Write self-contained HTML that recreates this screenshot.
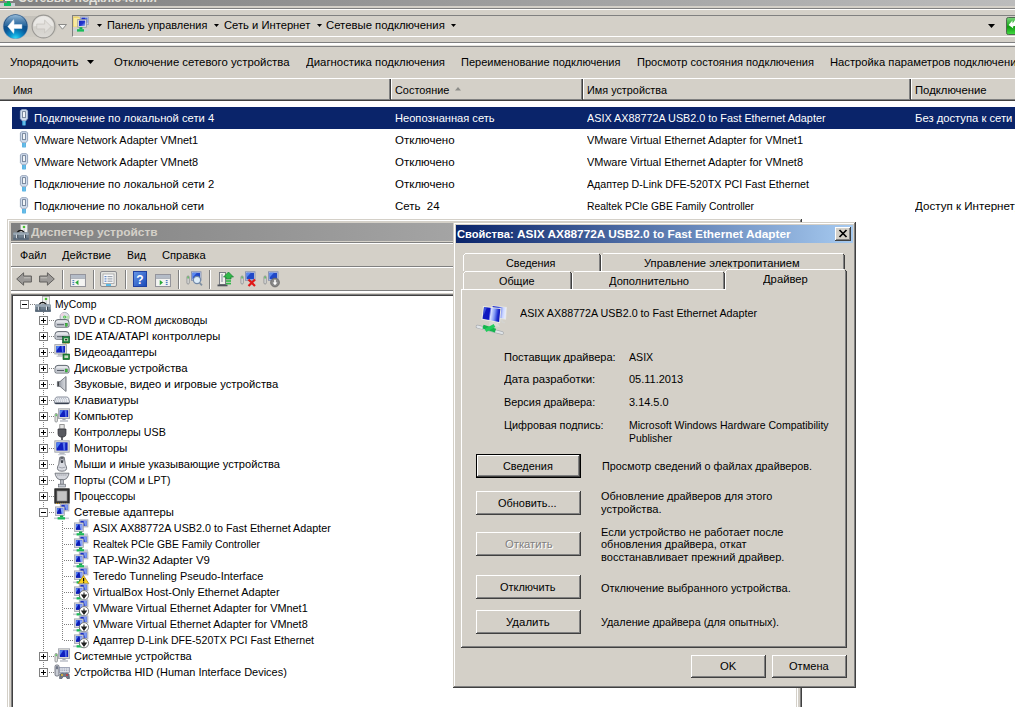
<!DOCTYPE html>
<html><head><meta charset="utf-8">
<style>
html,body{margin:0;padding:0;}
body{width:1015px;height:707px;overflow:hidden;position:relative;background:#d4d0c8;font-family:"Liberation Sans",sans-serif;font-size:11px;color:#000;}
div,span{position:absolute;white-space:pre;box-sizing:border-box;}
svg{position:absolute;overflow:visible;}
.t{transform-origin:0 50%;}
</style></head><body>
<div style="left:0;top:0;width:1015px;height:6px;background:linear-gradient(90deg,#808080,#bcbcbc);overflow:hidden;">
<span class="t" style="left:18.4px;top:-10px;font-size:13px;line-height:16px;height:16px;color:#e4e2dc;font-weight:bold;transform:scaleX(0.9418);">Сетевые подключения</span>
</div>
<div style="left:0px;top:0px;width:3px;height:1px;background:#e8c840;"></div>
<div style="left:5px;top:0px;width:8px;height:1px;background:#f4f4f0;"></div>
<div style="left:7px;top:1px;width:3px;height:2px;background:#18b050;"></div>
<div style="left:0px;top:3px;width:15px;height:3px;background:#c4ccd4;"></div>
<div style="left:4px;top:3px;width:7px;height:3px;background:#10c060;"></div>
<div style="left:0px;top:8px;width:1015px;height:1px;background:#808080;"></div>
<div style="left:0px;top:9px;width:1015px;height:1px;background:#ffffff;"></div>
<div style="left:0px;top:42px;width:1015px;height:1px;background:#808080;"></div>
<div style="left:0px;top:43px;width:1015px;height:2px;background:#ffffff;"></div>
<div style="left:0px;top:45px;width:1015px;height:1px;background:#e6e4de;"></div>
<div style="left:0px;top:46px;width:1015px;height:1px;background:#808080;"></div>
<div style="left:3px;top:16px;width:54px;height:21px;border-radius:11px;background:linear-gradient(180deg,#c4c1ba,#cfccc4);"></div>
<svg style="left:3px;top:14px" width="25" height="25" viewBox="0 0 25 25">
<defs>
<radialGradient id="bk1" cx="50%" cy="100%" r="80%"><stop offset="0" stop-color="#30dcf8"/><stop offset="0.3" stop-color="#0a90cc"/><stop offset="0.62" stop-color="#0a5898"/><stop offset="1" stop-color="#184878"/></radialGradient>
<linearGradient id="bk2" x1="0" y1="0" x2="0" y2="1"><stop offset="0" stop-color="#a4c8e4" stop-opacity=".9"/><stop offset="1" stop-color="#3c7cb4" stop-opacity=".5"/></linearGradient>
</defs>
<circle cx="12.5" cy="12.5" r="12.6" fill="#8ca0b8"/>
<circle cx="12.5" cy="12.5" r="12" fill="url(#bk1)"/>
<path d="M1.2 12.2A11.3 11.3 0 0 1 23.8 12.2Q12.5 10 1.2 12.2Z" fill="url(#bk2)"/>
<path d="M4.8 12.5L10.6 5.6Q11.4 8 11 10.5H18.9V14.5H11Q11.4 17 10.6 19.4Z" fill="#fff" stroke="#dce8f4" stroke-width=".5" stroke-linejoin="round"/>
</svg>
<svg style="left:31px;top:14px" width="25" height="25" viewBox="0 0 27 27">
<defs>
<linearGradient id="fw1" x1="0" y1="0" x2="0" y2="1"><stop offset="0" stop-color="#e6e4e0"/><stop offset="0.5" stop-color="#d2d0ca"/><stop offset="1" stop-color="#dcdad6"/></linearGradient>
</defs>
<circle cx="13.5" cy="13.5" r="12.3" fill="url(#fw1)" stroke="#9a9894" stroke-width="1.2"/>
<path d="M2.6 13.5A10.9 10.9 0 0 1 24.4 13.5Q13.5 11.5 2.6 13.5Z" fill="#ecebe8" opacity=".8"/>
<path d="M21.8 13.5L14.7 6.6V10.9H6.2V16.1H14.7V20.4Z" fill="#e2e0dc" stroke="#c4c2bc" stroke-width=".8" stroke-linejoin="round"/>
</svg>
<svg style="left:58px;top:24px" width="9" height="6" viewBox="0 0 9 6"><path d="M0.5 0.5H8.5L4.5 5.2Z" fill="#f4f4f2" stroke="#8a8a88" stroke-width="1"/></svg>
<div style="left:72px;top:15px;width:960px;height:22px;background:#d4d0c8;border:1px solid;border-color:#808080 #fff #fff #808080;"></div>
<svg style="left:73px;top:16px" width="16" height="16" viewBox="0 0 16 16">
<defs><linearGradient id="as1" x1="0" y1="0" x2="1" y2="1"><stop offset="0" stop-color="#1424c0"/><stop offset=".55" stop-color="#2438d0"/><stop offset="1" stop-color="#a8c0f8"/></linearGradient></defs>
<path d="M0.2 0.4H5L6.4 1.6H7.4V11H0.2Z" fill="#ecd060"/><path d="M0.8 1.8H6.6V10.6H0.8Z" fill="#f8eaa0"/>
<rect x="7.4" y="0.9" width="8" height="7.8" fill="#c4cce4" stroke="#8c94b0" stroke-width=".6"/><rect x="8.6" y="1.8" width="5.8" height="5" fill="#4c6ce0"/><path d="M8.6 1.8H12V3.6H8.6Z" fill="#1c2cc8"/>
<rect x="4.8" y="3.6" width="8.6" height="7.6" fill="#e6e6e2" stroke="#888c98" stroke-width=".7"/>
<rect x="6" y="4.6" width="6.2" height="5.4" fill="url(#as1)"/>
<rect x="6.4" y="11.2" width="3" height="2.4" fill="#14b050"/>
<rect x="0.4" y="13.6" width="14.8" height="1.5" fill="#c8d4dc"/><rect x="4" y="13.2" width="7" height="2.4" fill="#18bc58"/>
</svg>
<svg style="left:97px;top:23.7px" width="5" height="3" viewBox="0 0 5 3"><path d="M0 0H5L2.5 3Z" fill="#000"/></svg>
<span class="t" style="left:106.9px;top:18px;font-size:11px;line-height:14px;height:14px;color:#000;transform:scaleX(0.9925);">Панель управления</span>
<svg style="left:213.5px;top:23.7px" width="5" height="3" viewBox="0 0 5 3"><path d="M0 0H5L2.5 3Z" fill="#000"/></svg>
<span class="t" style="left:223.9px;top:18px;font-size:11px;line-height:14px;height:14px;color:#000;transform:scaleX(1.0187);">Сеть и Интернет</span>
<svg style="left:316.5px;top:23.7px" width="5" height="3" viewBox="0 0 5 3"><path d="M0 0H5L2.5 3Z" fill="#000"/></svg>
<span class="t" style="left:326.4px;top:18px;font-size:11px;line-height:14px;height:14px;color:#000;transform:scaleX(1.0304);">Сетевые подключения</span>
<svg style="left:451px;top:23.7px" width="5" height="3" viewBox="0 0 5 3"><path d="M0 0H5L2.5 3Z" fill="#000"/></svg>
<svg style="left:988px;top:24.3px" width="7" height="4" viewBox="0 0 7 4"><path d="M0 0H7L3.5 4Z" fill="#000"/></svg>
<svg style="left:1006px;top:17px" width="9" height="18" viewBox="0 0 9 18">
<defs><linearGradient id="go" x1="0" y1="0" x2="0" y2="1"><stop offset="0" stop-color="#7cd47c"/><stop offset=".4" stop-color="#2cb02c"/><stop offset=".55" stop-color="#109c10"/><stop offset="1" stop-color="#44dc44"/></linearGradient></defs>
<rect x="0.5" y="0.5" width="14" height="17" rx="1.8" fill="url(#go)" stroke="#506850"/>
<path d="M2.6 8L6.4 3.6L6.6 6.2Q8 5 9 3V9Q8 8.8 6.8 9.4L7.4 11.6Z" fill="#fff"/>
</svg>
<span class="t" style="left:10.4px;top:55px;font-size:11px;line-height:14px;height:14px;color:#000;transform:scaleX(1.0463);">Упорядочить</span>
<svg style="left:86.8px;top:60px" width="7" height="4" viewBox="0 0 7 4"><path d="M0 0H7L3.5 4Z" fill="#000"/></svg>
<span class="t" style="left:113.9px;top:55px;font-size:11px;line-height:14px;height:14px;color:#000;transform:scaleX(1.0327);">Отключение сетевого устройства</span>
<span class="t" style="left:306.4px;top:55px;font-size:11px;line-height:14px;height:14px;color:#000;transform:scaleX(1.0337);">Диагностика подключения</span>
<span class="t" style="left:461.4px;top:55px;font-size:11px;line-height:14px;height:14px;color:#000;transform:scaleX(1.0022);">Переименование подключения</span>
<span class="t" style="left:636.9px;top:55px;font-size:11px;line-height:14px;height:14px;color:#000;transform:scaleX(1.0034);">Просмотр состояния подключения</span>
<span class="t" style="left:829.9px;top:55px;font-size:11px;line-height:14px;height:14px;color:#000;transform:scaleX(1.0204);">Настройка параметров подключения</span>
<div style="left:0px;top:78px;width:1015px;height:1px;background:#ffffff;"></div>
<div style="left:0px;top:99px;width:1015px;height:1px;background:#808080;"></div>
<div style="left:0px;top:100px;width:1015px;height:1px;background:#404040;"></div>
<div style="left:389px;top:79px;width:1px;height:20px;background:#808080;"></div>
<div style="left:390px;top:79px;width:1px;height:21px;background:#404040;"></div>
<div style="left:391px;top:78px;width:1px;height:21px;background:#ffffff;"></div>
<div style="left:581px;top:79px;width:1px;height:20px;background:#808080;"></div>
<div style="left:582px;top:79px;width:1px;height:21px;background:#404040;"></div>
<div style="left:583px;top:78px;width:1px;height:21px;background:#ffffff;"></div>
<div style="left:909px;top:79px;width:1px;height:20px;background:#808080;"></div>
<div style="left:910px;top:79px;width:1px;height:21px;background:#404040;"></div>
<div style="left:911px;top:78px;width:1px;height:21px;background:#ffffff;"></div>
<span class="t" style="left:13px;top:83px;font-size:11px;line-height:14px;height:14px;color:#000;transform:scaleX(0.9050);">Имя</span>
<span class="t" style="left:395px;top:83px;font-size:11px;line-height:14px;height:14px;color:#000;transform:scaleX(0.9911);">Состояние</span>
<svg style="left:455px;top:87px" width="6" height="4" viewBox="0 0 6 4"><path d="M0 3.5H6L3 0Z" fill="#8c8c88"/></svg>
<span class="t" style="left:587.4px;top:83px;font-size:11px;line-height:14px;height:14px;color:#000;transform:scaleX(0.9858);">Имя устройства</span>
<span class="t" style="left:914.8px;top:83px;font-size:11px;line-height:14px;height:14px;color:#000;transform:scaleX(1.0265);">Подключение</span>
<div style="left:0px;top:101px;width:1015px;height:606px;background:#fff;"></div>
<div style="left:12px;top:107px;width:1003px;height:22px;background:#0a246a;"></div>
<svg style="left:19px;top:109px" width="10" height="17" viewBox="0 0 10 17">
<path d="M2.6 0.7H7.4L8.6 2V9.6L6.8 11.8H3.2L1.4 9.6V2Z" fill="#d0dcec" stroke="#a4b8d4" stroke-width=".9"/>
<rect x="3.6" y="2.6" width="2.8" height="6" fill="#f8fafc" stroke="#6c7c94" stroke-width=".9"/>
<rect x="3.2" y="12" width="3.6" height="4.4" fill="#38a4dc"/><rect x="4.6" y="12" width=".9" height="4.4" fill="#9cd8f4"/>
</svg>
<span class="t" style="left:33.8px;top:111px;font-size:11px;line-height:14px;height:14px;color:#fff;transform:scaleX(1.0180);">Подключение по локальной сети 4</span>
<span class="t" style="left:394.8px;top:111px;font-size:11px;line-height:14px;height:14px;color:#fff;transform:scaleX(1.0094);">Неопознанная сеть</span>
<span class="t" style="left:587.4px;top:111px;font-size:11px;line-height:14px;height:14px;color:#fff;transform:scaleX(0.9824);">ASIX AX88772A USB2.0 to Fast Ethernet Adapter</span>
<span class="t" style="left:915px;top:111px;font-size:11px;line-height:14px;height:14px;color:#fff;transform:scaleX(1.0217);">Без доступа к сети</span>
<svg style="left:19px;top:131px" width="10" height="17" viewBox="0 0 10 17">
<path d="M2.6 0.7H7.4L8.6 2V9.6L6.8 11.8H3.2L1.4 9.6V2Z" fill="#d0dcec" stroke="#8c9cb4" stroke-width=".9"/>
<rect x="3.6" y="2.6" width="2.8" height="6" fill="#f8fafc" stroke="#6c7c94" stroke-width=".9"/>
<rect x="3.2" y="12" width="3.6" height="4.4" fill="#38a4dc"/><rect x="4.6" y="12" width=".9" height="4.4" fill="#9cd8f4"/>
</svg>
<span class="t" style="left:33.8px;top:133px;font-size:11px;line-height:14px;height:14px;color:#000;transform:scaleX(0.9904);">VMware Network Adapter VMnet1</span>
<span class="t" style="left:394.8px;top:133px;font-size:11px;line-height:14px;height:14px;color:#000;transform:scaleX(1.0456);">Отключено</span>
<span class="t" style="left:587.4px;top:133px;font-size:11px;line-height:14px;height:14px;color:#000;transform:scaleX(0.9960);">VMware Virtual Ethernet Adapter for VMnet1</span>
<svg style="left:19px;top:153px" width="10" height="17" viewBox="0 0 10 17">
<path d="M2.6 0.7H7.4L8.6 2V9.6L6.8 11.8H3.2L1.4 9.6V2Z" fill="#d0dcec" stroke="#8c9cb4" stroke-width=".9"/>
<rect x="3.6" y="2.6" width="2.8" height="6" fill="#f8fafc" stroke="#6c7c94" stroke-width=".9"/>
<rect x="3.2" y="12" width="3.6" height="4.4" fill="#38a4dc"/><rect x="4.6" y="12" width=".9" height="4.4" fill="#9cd8f4"/>
</svg>
<span class="t" style="left:33.8px;top:155px;font-size:11px;line-height:14px;height:14px;color:#000;transform:scaleX(0.9904);">VMware Network Adapter VMnet8</span>
<span class="t" style="left:394.8px;top:155px;font-size:11px;line-height:14px;height:14px;color:#000;transform:scaleX(1.0456);">Отключено</span>
<span class="t" style="left:587.4px;top:155px;font-size:11px;line-height:14px;height:14px;color:#000;transform:scaleX(0.9960);">VMware Virtual Ethernet Adapter for VMnet8</span>
<svg style="left:19px;top:175px" width="10" height="17" viewBox="0 0 10 17">
<path d="M2.6 0.7H7.4L8.6 2V9.6L6.8 11.8H3.2L1.4 9.6V2Z" fill="#d0dcec" stroke="#8c9cb4" stroke-width=".9"/>
<rect x="3.6" y="2.6" width="2.8" height="6" fill="#f8fafc" stroke="#6c7c94" stroke-width=".9"/>
<rect x="3.2" y="12" width="3.6" height="4.4" fill="#38a4dc"/><rect x="4.6" y="12" width=".9" height="4.4" fill="#9cd8f4"/>
</svg>
<span class="t" style="left:33.8px;top:177px;font-size:11px;line-height:14px;height:14px;color:#000;transform:scaleX(1.0180);">Подключение по локальной сети 2</span>
<span class="t" style="left:394.8px;top:177px;font-size:11px;line-height:14px;height:14px;color:#000;transform:scaleX(1.0456);">Отключено</span>
<span class="t" style="left:587.4px;top:177px;font-size:11px;line-height:14px;height:14px;color:#000;transform:scaleX(0.9676);">Адаптер D-Link DFE-520TX PCI Fast Ethernet</span>
<svg style="left:19px;top:197px" width="10" height="17" viewBox="0 0 10 17">
<path d="M2.6 0.7H7.4L8.6 2V9.6L6.8 11.8H3.2L1.4 9.6V2Z" fill="#d0dcec" stroke="#8c9cb4" stroke-width=".9"/>
<rect x="3.6" y="2.6" width="2.8" height="6" fill="#f8fafc" stroke="#6c7c94" stroke-width=".9"/>
<rect x="3.2" y="12" width="3.6" height="4.4" fill="#38a4dc"/><rect x="4.6" y="12" width=".9" height="4.4" fill="#9cd8f4"/>
</svg>
<span class="t" style="left:33.8px;top:199px;font-size:11px;line-height:14px;height:14px;color:#000;transform:scaleX(1.0140);">Подключение по локальной сети</span>
<span class="t" style="left:394.8px;top:199px;font-size:11px;line-height:14px;height:14px;color:#000;transform:scaleX(1.0414);">Сеть  24</span>
<span class="t" style="left:587.4px;top:199px;font-size:11px;line-height:14px;height:14px;color:#000;transform:scaleX(0.9420);">Realtek PCIe GBE Family Controller</span>
<span class="t" style="left:915px;top:199px;font-size:11px;line-height:14px;height:14px;color:#000;transform:scaleX(1.0542);">Доступ к Интернету</span>
<div style="left:7px;top:219px;width:795px;height:488px;background:#d4d0c8;"></div>
<div style="left:8px;top:220px;width:792px;height:1px;background:#ffffff;"></div>
<div style="left:8px;top:220px;width:1px;height:487px;background:#ffffff;"></div>
<div style="left:800px;top:220px;width:1px;height:487px;background:#808080;"></div>
<div style="left:801px;top:219px;width:1px;height:488px;background:#404040;"></div>
<div style="left:11px;top:223px;width:787px;height:18px;background:linear-gradient(90deg,#808080,#c0c0c0);"></div>
<svg style="left:13px;top:224px" width="16" height="16" viewBox="0 0 16 16"><rect x="7.4" y="0.4" width="7.2" height="8" fill="#f2f2f0" stroke="#a4a8ac" stroke-width=".8"/><circle cx="11" cy="3" r="1.3" fill="#48c030"/><rect x="10.6" y="4.6" width="1.4" height="3.4" fill="#d0d4d8"/><path d="M4 8.6Q7.6 4.2 11.4 8.6" fill="none" stroke="#101010" stroke-width="1.3"/><rect x="0.2" y="8.4" width="15.6" height="7.4" rx=".8" fill="#70808e"/><rect x="0.2" y="8.4" width="15.6" height="2.6" rx=".8" fill="#98a6b2"/><rect x="0.2" y="13.6" width="15.6" height="2.2" fill="#586878"/><rect x="3.2" y="10.6" width="1.6" height="3.6" fill="#e8ecf0"/><rect x="4.2" y="10.6" width="1" height="3.6" fill="#38424c"/><rect x="11" y="10.6" width="1.6" height="3.6" fill="#e8ecf0"/><rect x="12" y="10.6" width="1" height="3.6" fill="#38424c"/></svg>
<span class="t" style="left:31.4px;top:225px;font-size:11px;line-height:14px;height:14px;color:#d4d0c8;font-weight:bold;transform:scaleX(1.0836);">Диспетчер устройств</span>
<div style="left:11px;top:242px;width:787px;height:1px;background:#808080;"></div>
<div style="left:11px;top:243px;width:787px;height:1px;background:#ffffff;"></div>
<span class="t" style="left:20.4px;top:248px;font-size:11px;line-height:14px;height:14px;color:#000;transform:scaleX(0.9761);">Файл</span>
<span class="t" style="left:62.4px;top:248px;font-size:11px;line-height:14px;height:14px;color:#000;transform:scaleX(1.0132);">Действие</span>
<span class="t" style="left:127px;top:248px;font-size:11px;line-height:14px;height:14px;color:#000;transform:scaleX(0.9545);">Вид</span>
<span class="t" style="left:161.8px;top:248px;font-size:11px;line-height:14px;height:14px;color:#000;transform:scaleX(1.0103);">Справка</span>
<div style="left:11px;top:266px;width:787px;height:1px;background:#808080;"></div>
<div style="left:11px;top:267px;width:787px;height:1px;background:#ffffff;"></div>
<div style="left:11px;top:268px;width:1px;height:22px;background:#ffffff;"></div>
<div style="left:11px;top:244px;width:1px;height:22px;background:#ffffff;"></div>
<div style="left:11px;top:290px;width:787px;height:1px;background:#808080;"></div>
<div style="left:11px;top:291px;width:787px;height:2px;background:#ffffff;"></div>
<div style="left:62px;top:270px;width:1px;height:19px;background:#808080;"></div>
<div style="left:63px;top:270px;width:1px;height:19px;background:#ffffff;"></div>
<div style="left:93px;top:270px;width:1px;height:19px;background:#808080;"></div>
<div style="left:94px;top:270px;width:1px;height:19px;background:#ffffff;"></div>
<div style="left:125px;top:270px;width:1px;height:19px;background:#808080;"></div>
<div style="left:126px;top:270px;width:1px;height:19px;background:#ffffff;"></div>
<div style="left:178px;top:270px;width:1px;height:19px;background:#808080;"></div>
<div style="left:179px;top:270px;width:1px;height:19px;background:#ffffff;"></div>
<div style="left:209px;top:270px;width:1px;height:19px;background:#808080;"></div>
<div style="left:210px;top:270px;width:1px;height:19px;background:#ffffff;"></div>
<svg style="left:16px;top:272px" width="16" height="14" viewBox="0 0 16 14"><path d="M0.7 7L7.6 0.8V4H15.4V10H7.6V13.2Z" fill="#9c9a98" stroke="#62605e" stroke-width="1" stroke-linejoin="round"/><path d="M8 5H14.4V6.4H8Z" fill="#b8b6b2"/></svg>
<svg style="left:39px;top:272px" width="16" height="14" viewBox="0 0 16 14"><path d="M15.3 7L8.4 0.8V4H0.6V10H8.4V13.2Z" fill="#9c9a98" stroke="#62605e" stroke-width="1" stroke-linejoin="round"/><path d="M1.6 5H8V6.4H1.6Z" fill="#b8b6b2"/></svg>
<svg style="left:70px;top:274px" width="16" height="13" viewBox="0 0 17 14">
<rect x="0.5" y="0.5" width="16" height="13" fill="#f4f4f2" stroke="#8c8c94"/>
<rect x="1" y="1" width="15" height="3" fill="#b4bcc8"/><rect x="1" y="4" width="15" height="1" fill="#8c94a0"/>
<path d="M9 6.5L5.5 9.2L9 12Z" fill="#28a838"/><rect x="2.5" y="6.5" width="2" height="1.2" fill="#5080c0"/><rect x="2.5" y="8.6" width="2" height="1.2" fill="#5080c0"/><rect x="2.5" y="10.7" width="2" height="1.2" fill="#5080c0"/></svg>
<svg style="left:100px;top:271px" width="17" height="16" viewBox="0 0 17 16">
<rect x="0.5" y="0.5" width="16" height="15" rx="1.5" fill="#e4e4e0" stroke="#8c8c90"/>
<rect x="3" y="3" width="11" height="9.5" fill="#fafafa" stroke="#a0a0a4" stroke-width=".8"/>
<rect x="4.5" y="5" width="2" height="1.2" fill="#6088c8"/><rect x="7.5" y="5" width="5" height="1.2" fill="#9ca4b0"/>
<rect x="4.5" y="7.3" width="2" height="1.2" fill="#6088c8"/><rect x="7.5" y="7.3" width="5" height="1.2" fill="#9ca4b0"/>
<rect x="4.5" y="9.6" width="2" height="1.2" fill="#6088c8"/><rect x="7.5" y="9.6" width="5" height="1.2" fill="#9ca4b0"/>
<rect x="6" y="13.2" width="5" height="1.6" fill="#38b0e8"/>
</svg>
<svg style="left:133px;top:271px" width="14" height="16" viewBox="0 0 14 16">
<defs><linearGradient id="hq" x1="0" y1="0" x2="1" y2="1"><stop offset="0" stop-color="#6898e8"/><stop offset="1" stop-color="#1848b8"/></linearGradient></defs>
<rect x="0.5" y="0.5" width="13" height="15" fill="url(#hq)" stroke="#2040a0"/>
<text x="7" y="12.5" font-family="Liberation Sans" font-weight="bold" font-size="12" text-anchor="middle" fill="#fff">?</text>
</svg>
<svg style="left:155px;top:274px" width="16" height="13" viewBox="0 0 17 14">
<rect x="0.5" y="0.5" width="16" height="13" fill="#f4f4f2" stroke="#8c8c94"/>
<rect x="1" y="1" width="15" height="3" fill="#b4bcc8"/><rect x="1" y="4" width="15" height="1" fill="#8c94a0"/>
<path d="M5 6.5L8.5 9.2L5 12Z" fill="#28a838"/><rect x="11.5" y="6.5" width="2" height="1.2" fill="#5080c0"/><rect x="11.5" y="8.6" width="2" height="1.2" fill="#5080c0"/><rect x="11.5" y="10.7" width="2" height="1.2" fill="#5080c0"/></svg>
<svg style="left:186px;top:271px" width="17" height="16" viewBox="0 0 17 16">
<rect x="1" y="5" width="2.2" height="8" rx="1" fill="#e8e8e4" stroke="#808488" stroke-width=".8"/><rect x="1.5" y="5.5" width="1.2" height="2" fill="#40b840"/>
<rect x="5.5" y="0.8" width="9.5" height="8.5" fill="#c8d4ec" stroke="#7c88a8" stroke-width=".8"/>
<rect x="6.5" y="1.8" width="7.5" height="6.5" fill="#2048c8"/><path d="M6.5 1.8H11L6.5 6.5Z" fill="#5888f0"/>
<circle cx="11" cy="9" r="3.6" fill="#dcecf8" stroke="#7088a8" stroke-width="1.2"/><path d="M13.6 11.8L16 14.4" stroke="#8090a0" stroke-width="1.8"/></svg>
<svg style="left:217px;top:271px" width="17" height="16" viewBox="0 0 17 16">
<rect x="2.5" y="1.5" width="6" height="12" fill="#f0f0ec" stroke="#70747c" stroke-width=".9"/><rect x="4" y="3" width="2" height="8" fill="#b8bcc4"/>
<rect x="0.5" y="13.5" width="10" height="1.8" fill="#50545c"/>
<path d="M11.5 1L16.5 6H14V8H9V6H6.5Z" fill="#30b848" stroke="#188030" stroke-width=".7"/>
<rect x="9" y="9.2" width="5" height="1.6" fill="#30b848"/><rect x="9" y="11.8" width="5" height="1.6" fill="#30b848"/>
</svg>
<svg style="left:240px;top:271px" width="17" height="16" viewBox="0 0 17 16">
<rect x="1" y="5" width="2.2" height="8" rx="1" fill="#e8e8e4" stroke="#808488" stroke-width=".8"/><rect x="1.5" y="5.5" width="1.2" height="2" fill="#40b840"/>
<rect x="5.5" y="0.8" width="9.5" height="8.5" fill="#c8d4ec" stroke="#7c88a8" stroke-width=".8"/>
<rect x="6.5" y="1.8" width="7.5" height="6.5" fill="#2048c8"/><path d="M6.5 1.8H11L6.5 6.5Z" fill="#5888f0"/>
<path d="M8.5 8.5L15 15M15 8.5L8.5 15" stroke="#e01818" stroke-width="2.2"/></svg>
<svg style="left:263px;top:271px" width="17" height="16" viewBox="0 0 17 16">
<rect x="1" y="5" width="2.2" height="8" rx="1" fill="#e8e8e4" stroke="#808488" stroke-width=".8"/><rect x="1.5" y="5.5" width="1.2" height="2" fill="#40b840"/>
<rect x="5.5" y="0.8" width="9.5" height="8.5" fill="#c8d4ec" stroke="#7c88a8" stroke-width=".8"/>
<rect x="6.5" y="1.8" width="7.5" height="6.5" fill="#2048c8"/><path d="M6.5 1.8H11L6.5 6.5Z" fill="#5888f0"/>
<circle cx="12" cy="11.5" r="4.4" fill="#888888" stroke="#5c5c5c" stroke-width=".7"/><path d="M11.2 8.8H12.8V11.4H14.4L12 14.2L9.6 11.4H11.2Z" fill="#fff"/></svg>
<div style="left:11px;top:294px;width:787px;height:413px;background:#fff;"></div>
<div style="left:11px;top:294px;width:787px;height:1px;background:#808080;"></div>
<div style="left:11px;top:294px;width:1px;height:413px;background:#808080;"></div>
<div style="left:12px;top:295px;width:785px;height:1px;background:#404040;"></div>
<div style="left:12px;top:295px;width:1px;height:412px;background:#404040;"></div>
<div style="left:796px;top:296px;width:1px;height:411px;background:#d4d0c8;"></div>
<div style="left:797px;top:295px;width:1px;height:412px;background:#ffffff;"></div>
<div style="left:43px;top:312px;width:1px;height:361px;background:repeating-linear-gradient(180deg,#808080 0 1px,transparent 1px 2px);"></div>
<div style="left:62px;top:521px;width:1px;height:120px;background:repeating-linear-gradient(180deg,#808080 0 1px,transparent 1px 2px);"></div>
<div style="left:30px;top:304px;width:5px;height:1px;background:repeating-linear-gradient(90deg,#808080 0 1px,transparent 1px 2px);"></div>
<div style="left:20px;top:300px;width:9px;height:9px;background:#fff;border:1px solid #808080;"></div><div style="left:22px;top:304px;width:5px;height:1px;background:#000;"></div>
<svg style="left:35px;top:296px" width="16" height="16" viewBox="0 0 16 16"><rect x="7.4" y="0.4" width="7.2" height="8" fill="#f2f2f0" stroke="#a4a8ac" stroke-width=".8"/><circle cx="11" cy="3" r="1.3" fill="#48c030"/><rect x="10.6" y="4.6" width="1.4" height="3.4" fill="#d0d4d8"/><path d="M4 8.6Q7.6 4.2 11.4 8.6" fill="none" stroke="#101010" stroke-width="1.3"/><rect x="0.2" y="8.4" width="15.6" height="7.4" rx=".8" fill="#70808e"/><rect x="0.2" y="8.4" width="15.6" height="2.6" rx=".8" fill="#98a6b2"/><rect x="0.2" y="13.6" width="15.6" height="2.2" fill="#586878"/><rect x="3.2" y="10.6" width="1.6" height="3.6" fill="#e8ecf0"/><rect x="4.2" y="10.6" width="1" height="3.6" fill="#38424c"/><rect x="11" y="10.6" width="1.6" height="3.6" fill="#e8ecf0"/><rect x="12" y="10.6" width="1" height="3.6" fill="#38424c"/></svg>
<span class="t" style="left:55px;top:297px;font-size:11px;line-height:14px;height:14px;color:#000;transform:scaleX(0.9406);">MyComp</span>
<div style="left:49px;top:320px;width:5px;height:1px;background:repeating-linear-gradient(90deg,#808080 0 1px,transparent 1px 2px);"></div>
<div style="left:39px;top:316px;width:9px;height:9px;background:#fff;border:1px solid #808080;"></div><div style="left:41px;top:320px;width:5px;height:1px;background:#000;"></div><div style="left:43px;top:318px;width:1px;height:5px;background:#000;"></div>
<svg style="left:54px;top:312px" width="16" height="16" viewBox="0 0 16 16"><circle cx="10.6" cy="5" r="4.6" fill="#dfe2e8" stroke="#8c94a0" stroke-width=".7"/><path d="M10.6 5L14.8 3.4A4.6 4.6 0 0 1 14.6 7.2Z" fill="#b8e0b0"/><path d="M10.6 5L6.4 3.2A4.6 4.6 0 0 1 9 0.7Z" fill="#f0d0e0"/><circle cx="10.6" cy="5" r="1.5" fill="#48c048"/><circle cx="10.6" cy="5" r=".6" fill="#f0f0f0"/><path d="M1 10.6 Q1 7.6 4 7.6H12Q15 7.6 15 10.6V14Q15 15.2 13.5 15.2H2.5Q1 15.2 1 14Z" fill="#e4e6ea" stroke="#505862" stroke-width=".9"/><path d="M1.6 10.8H14.4V13.8Q14.4 14.6 13.4 14.6H2.6Q1.6 14.6 1.6 13.8Z" fill="#c2c6ce"/><rect x="3" y="12.2" width="7" height="1" fill="#585e68"/><rect x="11.4" y="11.2" width="1.8" height="3" fill="#38c838" stroke="#207020" stroke-width=".4"/></svg>
<span class="t" style="left:74px;top:313px;font-size:11px;line-height:14px;height:14px;color:#000;transform:scaleX(0.9611);">DVD и CD-ROM дисководы</span>
<div style="left:49px;top:336px;width:5px;height:1px;background:repeating-linear-gradient(90deg,#808080 0 1px,transparent 1px 2px);"></div>
<div style="left:39px;top:332px;width:9px;height:9px;background:#fff;border:1px solid #808080;"></div><div style="left:41px;top:336px;width:5px;height:1px;background:#000;"></div><div style="left:43px;top:334px;width:1px;height:5px;background:#000;"></div>
<svg style="left:54px;top:328px" width="16" height="16" viewBox="0 0 16 16"><path d="M1 6.6 Q1 3.6 4 3.6H12Q15 3.6 15 6.6V10Q15 11.2 13.5 11.2H2.5Q1 11.2 1 10Z" fill="#e4e6ea" stroke="#505862" stroke-width=".9"/><path d="M1.6 6.8H14.4V9.8Q14.4 10.6 13.4 10.6H2.6Q1.6 10.6 1.6 9.8Z" fill="#c2c6ce"/><rect x="3" y="8.2" width="7" height="1" fill="#585e68"/><rect x="8.6" y="8.6" width="7" height="6.4" fill="#1c8840" stroke="#0c4820" stroke-width=".6"/><rect x="10" y="10.2" width="4.2" height="3" fill="#b8d8b0"/><rect x="11" y="11" width="2.2" height="1.4" fill="#304030"/><path d="M9.4 15.4H15" stroke="#c8a030" stroke-width=".8" stroke-dasharray="1 .6"/></svg>
<span class="t" style="left:74px;top:329px;font-size:11px;line-height:14px;height:14px;color:#000;transform:scaleX(1.0156);">IDE ATA/ATAPI контроллеры</span>
<div style="left:49px;top:352px;width:5px;height:1px;background:repeating-linear-gradient(90deg,#808080 0 1px,transparent 1px 2px);"></div>
<div style="left:39px;top:348px;width:9px;height:9px;background:#fff;border:1px solid #808080;"></div><div style="left:41px;top:352px;width:5px;height:1px;background:#000;"></div><div style="left:43px;top:350px;width:1px;height:5px;background:#000;"></div>
<svg style="left:54px;top:344px" width="16" height="16" viewBox="0 0 16 16"><rect x="0.8" y="0.6" width="11.6" height="9.4" fill="#dcdcd6" stroke="#9ca0a8" stroke-width=".8"/><rect x="2.2" y="2" width="8.8" height="6.6" fill="#1020c0"/><path d="M2.2 2H6L2.2 7Z" fill="#5080f0"/><path d="M7.4 2H9.4V8.6H8.2Z" fill="#6c8cf4" opacity=".8"/><rect x="4" y="10.2" width="5" height="1.4" fill="#a8acb4"/><rect x="2.6" y="11.6" width="6" height="1.2" fill="#c0c4cc"/><rect x="9" y="10" width="6.6" height="5.6" fill="#208838" stroke="#105020" stroke-width=".6"/><rect x="10.4" y="11.4" width="3.8" height="2.6" fill="#c8d8c0"/></svg>
<span class="t" style="left:74px;top:345px;font-size:11px;line-height:14px;height:14px;color:#000;transform:scaleX(1.0121);">Видеоадаптеры</span>
<div style="left:49px;top:368px;width:5px;height:1px;background:repeating-linear-gradient(90deg,#808080 0 1px,transparent 1px 2px);"></div>
<div style="left:39px;top:364px;width:9px;height:9px;background:#fff;border:1px solid #808080;"></div><div style="left:41px;top:368px;width:5px;height:1px;background:#000;"></div><div style="left:43px;top:366px;width:1px;height:5px;background:#000;"></div>
<svg style="left:54px;top:360px" width="16" height="16" viewBox="0 0 16 16"><path d="M1 8.4 Q1 5.4 4 5.4H12Q15 5.4 15 8.4V11.8Q15 13 13.5 13H2.5Q1 13 1 11.8Z" fill="#e4e6ea" stroke="#505862" stroke-width=".9"/><path d="M1.6 8.6H14.4V11.6Q14.4 12.4 13.4 12.4H2.6Q1.6 12.4 1.6 11.6Z" fill="#c2c6ce"/><rect x="3" y="10" width="7" height="1" fill="#585e68"/><rect x="11.4" y="9" width="1.8" height="3" fill="#38c838" stroke="#207020" stroke-width=".4"/></svg>
<span class="t" style="left:74px;top:361px;font-size:11px;line-height:14px;height:14px;color:#000;transform:scaleX(1.0351);">Дисковые устройства</span>
<div style="left:49px;top:384px;width:5px;height:1px;background:repeating-linear-gradient(90deg,#808080 0 1px,transparent 1px 2px);"></div>
<div style="left:39px;top:380px;width:9px;height:9px;background:#fff;border:1px solid #808080;"></div><div style="left:41px;top:384px;width:5px;height:1px;background:#000;"></div><div style="left:43px;top:382px;width:1px;height:5px;background:#000;"></div>
<svg style="left:54px;top:376px" width="16" height="16" viewBox="0 0 16 16"><defs><linearGradient id="spk" x1="0" y1="0" x2="1" y2="0"><stop offset="0" stop-color="#7c8088"/><stop offset=".5" stop-color="#b4b8c0"/><stop offset="1" stop-color="#dcdee2"/></linearGradient></defs><path d="M3.4 5.6H6L11.8 0.6V15.4L6 10.4H3.4Z" fill="url(#spk)" stroke="#585c64" stroke-width=".7"/><path d="M12 0.6V15.4" stroke="#8c9098" stroke-width="1"/><path d="M4.4 6V10" stroke="#404448" stroke-width="1.2"/></svg>
<span class="t" style="left:74px;top:377px;font-size:11px;line-height:14px;height:14px;color:#000;transform:scaleX(1.0227);">Звуковые, видео и игровые устройства</span>
<div style="left:49px;top:400px;width:5px;height:1px;background:repeating-linear-gradient(90deg,#808080 0 1px,transparent 1px 2px);"></div>
<div style="left:39px;top:396px;width:9px;height:9px;background:#fff;border:1px solid #808080;"></div><div style="left:41px;top:400px;width:5px;height:1px;background:#000;"></div><div style="left:43px;top:398px;width:1px;height:5px;background:#000;"></div>
<svg style="left:54px;top:392px" width="16" height="16" viewBox="0 0 16 16"><path d="M3.4 5H12.6Q14 5 14.6 6.2L15.6 10.4Q15.6 11.8 14 11.8H2Q0.4 11.8 0.4 10.4L1.4 6.2Q2 5 3.4 5Z" fill="#f0f2f6" stroke="#687080" stroke-width=".8"/><path d="M0.6 10.6H15.4Q15.4 12 14 12H2Q0.6 12 0.6 10.6Z" fill="#384050"/><path d="M3.2 6.4H12.8M2.6 7.8H13.4M2.2 9.2H13.8" stroke="#9ca4b4" stroke-width=".8" stroke-dasharray="1 .9"/></svg>
<span class="t" style="left:74px;top:393px;font-size:11px;line-height:14px;height:14px;color:#000;transform:scaleX(1.0525);">Клавиатуры</span>
<div style="left:49px;top:416px;width:5px;height:1px;background:repeating-linear-gradient(90deg,#808080 0 1px,transparent 1px 2px);"></div>
<div style="left:39px;top:412px;width:9px;height:9px;background:#fff;border:1px solid #808080;"></div><div style="left:41px;top:416px;width:5px;height:1px;background:#000;"></div><div style="left:43px;top:414px;width:1px;height:5px;background:#000;"></div>
<svg style="left:54px;top:408px" width="16" height="16" viewBox="0 0 16 16"><rect x="1" y="5.5" width="2.4" height="8.5" rx="1" fill="#e8e8e4" stroke="#808488" stroke-width=".8"/><rect x="1.6" y="6.2" width="1.2" height="2" fill="#40c040"/><rect x="4.4" y="0.8" width="11.2" height="9.6" fill="#dcdcd6" stroke="#9ca0a8" stroke-width=".8"/><rect x="5.8" y="2.2" width="8.4" height="6.8" fill="#1020c0"/><path d="M5.8 2.2H9.4L5.8 7.4Z" fill="#5080f0"/><path d="M10.6 2.2H12.6V9H11.4Z" fill="#6c8cf4" opacity=".8"/><rect x="8.4" y="10.6" width="3.2" height="1.6" fill="#a8acb4"/><rect x="6" y="12.2" width="8" height="1.6" fill="#c0c4cc"/></svg>
<span class="t" style="left:74px;top:409px;font-size:11px;line-height:14px;height:14px;color:#000;transform:scaleX(1.0397);">Компьютер</span>
<div style="left:49px;top:432px;width:5px;height:1px;background:repeating-linear-gradient(90deg,#808080 0 1px,transparent 1px 2px);"></div>
<div style="left:39px;top:428px;width:9px;height:9px;background:#fff;border:1px solid #808080;"></div><div style="left:41px;top:432px;width:5px;height:1px;background:#000;"></div><div style="left:43px;top:430px;width:1px;height:5px;background:#000;"></div>
<svg style="left:54px;top:424px" width="16" height="16" viewBox="0 0 16 16"><rect x="5.8" y="0.6" width="4.4" height="4.4" fill="#e4e4e4" stroke="#808080" stroke-width=".8"/><path d="M4 5H12V10Q12 12.5 9.5 13H6.5Q4 12.5 4 10Z" fill="#585a60" stroke="#303238" stroke-width=".7"/><rect x="7.2" y="13" width="1.6" height="3" fill="#404248"/></svg>
<span class="t" style="left:74px;top:425px;font-size:11px;line-height:14px;height:14px;color:#000;transform:scaleX(0.9735);">Контроллеры USB</span>
<div style="left:49px;top:448px;width:5px;height:1px;background:repeating-linear-gradient(90deg,#808080 0 1px,transparent 1px 2px);"></div>
<div style="left:39px;top:444px;width:9px;height:9px;background:#fff;border:1px solid #808080;"></div><div style="left:41px;top:448px;width:5px;height:1px;background:#000;"></div><div style="left:43px;top:446px;width:1px;height:5px;background:#000;"></div>
<svg style="left:54px;top:440px" width="16" height="16" viewBox="0 0 16 16"><rect x="0.8" y="0.8" width="14.4" height="11.4" fill="#dcdcd6" stroke="#9ca0a8" stroke-width=".8"/><rect x="2.4" y="2.4" width="11.2" height="8.2" fill="#1020c0"/><path d="M2.4 2.4H7L2.4 9Z" fill="#5080f0"/><path d="M8.6 2.4H11.2V10.6H9.6Z" fill="#6c8cf4" opacity=".8"/><rect x="5.4" y="12.4" width="5.2" height="2.2" fill="#b4b8c0"/><rect x="4" y="14.2" width="8" height="1" fill="#c8ccd4"/></svg>
<span class="t" style="left:74px;top:441px;font-size:11px;line-height:14px;height:14px;color:#000;transform:scaleX(1.0116);">Мониторы</span>
<div style="left:49px;top:464px;width:5px;height:1px;background:repeating-linear-gradient(90deg,#808080 0 1px,transparent 1px 2px);"></div>
<div style="left:39px;top:460px;width:9px;height:9px;background:#fff;border:1px solid #808080;"></div><div style="left:41px;top:464px;width:5px;height:1px;background:#000;"></div><div style="left:43px;top:462px;width:1px;height:5px;background:#000;"></div>
<svg style="left:54px;top:456px" width="16" height="16" viewBox="0 0 16 16"><path d="M5.8 1.2Q8 0.2 10.2 1.2L11 6Q10.6 8 12.4 10.6Q13.6 15.2 8 15.2Q2.4 15.2 3.6 10.6Q5.4 8 5 6Z" fill="#d8dae0" stroke="#585c64" stroke-width=".8"/><path d="M6.4 1.2L6.8 6.4Q8 7.4 9.2 6.4L9.6 1.2Z" fill="#40444c"/><circle cx="8" cy="3.6" r="1" fill="#c0c4cc"/><path d="M4.6 11Q8 13 11.4 11" stroke="#9094a0" stroke-width=".8" fill="none"/></svg>
<span class="t" style="left:74px;top:457px;font-size:11px;line-height:14px;height:14px;color:#000;transform:scaleX(1.0086);">Мыши и иные указывающие устройства</span>
<div style="left:49px;top:480px;width:5px;height:1px;background:repeating-linear-gradient(90deg,#808080 0 1px,transparent 1px 2px);"></div>
<div style="left:39px;top:476px;width:9px;height:9px;background:#fff;border:1px solid #808080;"></div><div style="left:41px;top:480px;width:5px;height:1px;background:#000;"></div><div style="left:43px;top:478px;width:1px;height:5px;background:#000;"></div>
<svg style="left:54px;top:472px" width="16" height="16" viewBox="0 0 16 16"><path d="M1 1.2H15L14.4 3.6Q13 7.4 10 7.8H6Q3 7.4 1.6 3.6Z" fill="#d4d6dc" stroke="#60646c" stroke-width=".8"/><path d="M3.4 3H12.6" stroke="#888c94" stroke-width="1" stroke-dasharray="1 1"/><rect x="6.4" y="7.8" width="3.2" height="4.4" fill="#b8bcc4" stroke="#60646c" stroke-width=".6"/><rect x="4.4" y="12.2" width="7.2" height="2.8" fill="#c8ccd4" stroke="#60646c" stroke-width=".6"/></svg>
<span class="t" style="left:74px;top:473px;font-size:11px;line-height:14px;height:14px;color:#000;transform:scaleX(0.9514);">Порты (COM и LPT)</span>
<div style="left:49px;top:496px;width:5px;height:1px;background:repeating-linear-gradient(90deg,#808080 0 1px,transparent 1px 2px);"></div>
<div style="left:39px;top:492px;width:9px;height:9px;background:#fff;border:1px solid #808080;"></div><div style="left:41px;top:496px;width:5px;height:1px;background:#000;"></div><div style="left:43px;top:494px;width:1px;height:5px;background:#000;"></div>
<svg style="left:54px;top:488px" width="16" height="16" viewBox="0 0 16 16"><rect x="0.8" y="0.8" width="14.4" height="14.4" fill="#383838" stroke="#181818" stroke-width=".8"/><rect x="3" y="3" width="10" height="10" fill="#c4c4c4" stroke="#808080" stroke-width=".6"/><path d="M2 15.4H14" stroke="#d8a020" stroke-width="1" stroke-dasharray="1 1"/></svg>
<span class="t" style="left:74px;top:489px;font-size:11px;line-height:14px;height:14px;color:#000;transform:scaleX(0.9638);">Процессоры</span>
<div style="left:49px;top:512px;width:5px;height:1px;background:repeating-linear-gradient(90deg,#808080 0 1px,transparent 1px 2px);"></div>
<div style="left:39px;top:508px;width:9px;height:9px;background:#fff;border:1px solid #808080;"></div><div style="left:41px;top:512px;width:5px;height:1px;background:#000;"></div>
<svg style="left:54px;top:504px" width="16" height="16" viewBox="0 0 16 16"><rect x="6.2" y="-0.2" width="8.8" height="7.2" fill="#c4c8d4" stroke="#a0a4b0" stroke-width=".6"/><rect x="7.4" y="0.8" width="6.4" height="5" fill="#1c30c8"/><path d="M10.4 0.8H13.8V5.8H12Z" fill="#7c98f0"/><rect x="1.5" y="2.9" width="8.8" height="8.6" fill="#d8dadf" stroke="#9498a4" stroke-width=".7"/><rect x="2.9" y="4.2" width="6.3" height="5.7" fill="#0c1cb8"/><path d="M2.9 4.2H5.6L2.9 8.4Z" fill="#4c7cf0"/><path d="M6.6 4.2H9.2V9.9H7.6Z" fill="#88a4f8"/><rect x="6" y="11.5" width="3.2" height="2" fill="#16a84a"/><rect x="0" y="13.5" width="15" height="1.6" fill="#c8ccd4"/><rect x="3.6" y="13.2" width="7.4" height="2.3" fill="#1cbc58"/></svg>
<span class="t" style="left:74px;top:505px;font-size:11px;line-height:14px;height:14px;color:#000;transform:scaleX(1.0275);">Сетевые адаптеры</span>
<div style="left:64px;top:528px;width:9px;height:1px;background:repeating-linear-gradient(90deg,#808080 0 1px,transparent 1px 2px);"></div>
<svg style="left:73px;top:520px" width="16" height="16" viewBox="0 0 16 16"><rect x="6.2" y="-0.2" width="8.8" height="7.2" fill="#c4c8d4" stroke="#a0a4b0" stroke-width=".6"/><rect x="7.4" y="0.8" width="6.4" height="5" fill="#1c30c8"/><path d="M10.4 0.8H13.8V5.8H12Z" fill="#7c98f0"/><rect x="1.5" y="2.9" width="8.8" height="8.6" fill="#d8dadf" stroke="#9498a4" stroke-width=".7"/><rect x="2.9" y="4.2" width="6.3" height="5.7" fill="#0c1cb8"/><path d="M2.9 4.2H5.6L2.9 8.4Z" fill="#4c7cf0"/><path d="M6.6 4.2H9.2V9.9H7.6Z" fill="#88a4f8"/><rect x="6" y="11.5" width="3.2" height="2" fill="#16a84a"/><rect x="0" y="13.5" width="15" height="1.6" fill="#c8ccd4"/><rect x="3.6" y="13.2" width="7.4" height="2.3" fill="#1cbc58"/></svg>
<span class="t" style="left:93.4px;top:521px;font-size:11px;line-height:14px;height:14px;color:#000;transform:scaleX(0.9795);">ASIX AX88772A USB2.0 to Fast Ethernet Adapter</span>
<div style="left:64px;top:544px;width:9px;height:1px;background:repeating-linear-gradient(90deg,#808080 0 1px,transparent 1px 2px);"></div>
<svg style="left:73px;top:536px" width="16" height="16" viewBox="0 0 16 16"><rect x="6.2" y="-0.2" width="8.8" height="7.2" fill="#c4c8d4" stroke="#a0a4b0" stroke-width=".6"/><rect x="7.4" y="0.8" width="6.4" height="5" fill="#1c30c8"/><path d="M10.4 0.8H13.8V5.8H12Z" fill="#7c98f0"/><rect x="1.5" y="2.9" width="8.8" height="8.6" fill="#d8dadf" stroke="#9498a4" stroke-width=".7"/><rect x="2.9" y="4.2" width="6.3" height="5.7" fill="#0c1cb8"/><path d="M2.9 4.2H5.6L2.9 8.4Z" fill="#4c7cf0"/><path d="M6.6 4.2H9.2V9.9H7.6Z" fill="#88a4f8"/><rect x="6" y="11.5" width="3.2" height="2" fill="#16a84a"/><rect x="0" y="13.5" width="15" height="1.6" fill="#c8ccd4"/><rect x="3.6" y="13.2" width="7.4" height="2.3" fill="#1cbc58"/></svg>
<span class="t" style="left:93.4px;top:537px;font-size:11px;line-height:14px;height:14px;color:#000;transform:scaleX(0.9420);">Realtek PCIe GBE Family Controller</span>
<div style="left:64px;top:560px;width:9px;height:1px;background:repeating-linear-gradient(90deg,#808080 0 1px,transparent 1px 2px);"></div>
<svg style="left:73px;top:552px" width="16" height="16" viewBox="0 0 16 16"><rect x="6.2" y="-0.2" width="8.8" height="7.2" fill="#c4c8d4" stroke="#a0a4b0" stroke-width=".6"/><rect x="7.4" y="0.8" width="6.4" height="5" fill="#1c30c8"/><path d="M10.4 0.8H13.8V5.8H12Z" fill="#7c98f0"/><rect x="1.5" y="2.9" width="8.8" height="8.6" fill="#d8dadf" stroke="#9498a4" stroke-width=".7"/><rect x="2.9" y="4.2" width="6.3" height="5.7" fill="#0c1cb8"/><path d="M2.9 4.2H5.6L2.9 8.4Z" fill="#4c7cf0"/><path d="M6.6 4.2H9.2V9.9H7.6Z" fill="#88a4f8"/><rect x="6" y="11.5" width="3.2" height="2" fill="#16a84a"/><rect x="0" y="13.5" width="15" height="1.6" fill="#c8ccd4"/><rect x="3.6" y="13.2" width="7.4" height="2.3" fill="#1cbc58"/></svg>
<span class="t" style="left:93.4px;top:553px;font-size:11px;line-height:14px;height:14px;color:#000;transform:scaleX(1.0345);">TAP-Win32 Adapter V9</span>
<div style="left:64px;top:576px;width:9px;height:1px;background:repeating-linear-gradient(90deg,#808080 0 1px,transparent 1px 2px);"></div>
<svg style="left:73px;top:568px" width="16" height="16" viewBox="0 0 16 16"><rect x="6.2" y="-0.2" width="8.8" height="7.2" fill="#c4c8d4" stroke="#a0a4b0" stroke-width=".6"/><rect x="7.4" y="0.8" width="6.4" height="5" fill="#1c30c8"/><path d="M10.4 0.8H13.8V5.8H12Z" fill="#7c98f0"/><rect x="1.5" y="2.9" width="8.8" height="8.6" fill="#d8dadf" stroke="#9498a4" stroke-width=".7"/><rect x="2.9" y="4.2" width="6.3" height="5.7" fill="#0c1cb8"/><path d="M2.9 4.2H5.6L2.9 8.4Z" fill="#4c7cf0"/><path d="M6.6 4.2H9.2V9.9H7.6Z" fill="#88a4f8"/><rect x="6" y="11.5" width="3.2" height="2" fill="#16a84a"/><rect x="0" y="13.5" width="15" height="1.6" fill="#c8ccd4"/><rect x="3.6" y="13.2" width="7.4" height="2.3" fill="#1cbc58"/><path d="M10.5 7.5L15.8 15.5H5.2Z" fill="#f8d020" stroke="#a88000" stroke-width=".7"/><rect x="10" y="10" width="1.2" height="3" fill="#000"/><rect x="10" y="13.6" width="1.2" height="1.1" fill="#000"/></svg>
<span class="t" style="left:93.4px;top:569px;font-size:11px;line-height:14px;height:14px;color:#000;transform:scaleX(0.9945);">Teredo Tunneling Pseudo-Interface</span>
<div style="left:64px;top:592px;width:9px;height:1px;background:repeating-linear-gradient(90deg,#808080 0 1px,transparent 1px 2px);"></div>
<svg style="left:73px;top:584px" width="16" height="16" viewBox="0 0 16 16"><rect x="6.2" y="-0.2" width="8.8" height="7.2" fill="#c4c8d4" stroke="#a0a4b0" stroke-width=".6"/><rect x="7.4" y="0.8" width="6.4" height="5" fill="#1c30c8"/><path d="M10.4 0.8H13.8V5.8H12Z" fill="#7c98f0"/><rect x="1.5" y="2.9" width="8.8" height="8.6" fill="#d8dadf" stroke="#9498a4" stroke-width=".7"/><rect x="2.9" y="4.2" width="6.3" height="5.7" fill="#0c1cb8"/><path d="M2.9 4.2H5.6L2.9 8.4Z" fill="#4c7cf0"/><path d="M6.6 4.2H9.2V9.9H7.6Z" fill="#88a4f8"/><rect x="6" y="11.5" width="3.2" height="2" fill="#16a84a"/><rect x="0" y="13.5" width="15" height="1.6" fill="#c8ccd4"/><rect x="3.6" y="13.2" width="7.4" height="2.3" fill="#1cbc58"/><circle cx="11" cy="11.2" r="4.6" fill="#fff" stroke="#606060" stroke-width=".8"/><path d="M11 8.4V12M8.8 11L11 14L13.2 11Z" fill="#202020" stroke="#202020" stroke-width="1.1"/></svg>
<span class="t" style="left:93.4px;top:585px;font-size:11px;line-height:14px;height:14px;color:#000;transform:scaleX(0.9951);">VirtualBox Host-Only Ethernet Adapter</span>
<div style="left:64px;top:608px;width:9px;height:1px;background:repeating-linear-gradient(90deg,#808080 0 1px,transparent 1px 2px);"></div>
<svg style="left:73px;top:600px" width="16" height="16" viewBox="0 0 16 16"><rect x="6.2" y="-0.2" width="8.8" height="7.2" fill="#c4c8d4" stroke="#a0a4b0" stroke-width=".6"/><rect x="7.4" y="0.8" width="6.4" height="5" fill="#1c30c8"/><path d="M10.4 0.8H13.8V5.8H12Z" fill="#7c98f0"/><rect x="1.5" y="2.9" width="8.8" height="8.6" fill="#d8dadf" stroke="#9498a4" stroke-width=".7"/><rect x="2.9" y="4.2" width="6.3" height="5.7" fill="#0c1cb8"/><path d="M2.9 4.2H5.6L2.9 8.4Z" fill="#4c7cf0"/><path d="M6.6 4.2H9.2V9.9H7.6Z" fill="#88a4f8"/><rect x="6" y="11.5" width="3.2" height="2" fill="#16a84a"/><rect x="0" y="13.5" width="15" height="1.6" fill="#c8ccd4"/><rect x="3.6" y="13.2" width="7.4" height="2.3" fill="#1cbc58"/><circle cx="11" cy="11.2" r="4.6" fill="#fff" stroke="#606060" stroke-width=".8"/><path d="M11 8.4V12M8.8 11L11 14L13.2 11Z" fill="#202020" stroke="#202020" stroke-width="1.1"/></svg>
<span class="t" style="left:93.4px;top:601px;font-size:11px;line-height:14px;height:14px;color:#000;transform:scaleX(0.9900);">VMware Virtual Ethernet Adapter for VMnet1</span>
<div style="left:64px;top:624px;width:9px;height:1px;background:repeating-linear-gradient(90deg,#808080 0 1px,transparent 1px 2px);"></div>
<svg style="left:73px;top:616px" width="16" height="16" viewBox="0 0 16 16"><rect x="6.2" y="-0.2" width="8.8" height="7.2" fill="#c4c8d4" stroke="#a0a4b0" stroke-width=".6"/><rect x="7.4" y="0.8" width="6.4" height="5" fill="#1c30c8"/><path d="M10.4 0.8H13.8V5.8H12Z" fill="#7c98f0"/><rect x="1.5" y="2.9" width="8.8" height="8.6" fill="#d8dadf" stroke="#9498a4" stroke-width=".7"/><rect x="2.9" y="4.2" width="6.3" height="5.7" fill="#0c1cb8"/><path d="M2.9 4.2H5.6L2.9 8.4Z" fill="#4c7cf0"/><path d="M6.6 4.2H9.2V9.9H7.6Z" fill="#88a4f8"/><rect x="6" y="11.5" width="3.2" height="2" fill="#16a84a"/><rect x="0" y="13.5" width="15" height="1.6" fill="#c8ccd4"/><rect x="3.6" y="13.2" width="7.4" height="2.3" fill="#1cbc58"/><circle cx="11" cy="11.2" r="4.6" fill="#fff" stroke="#606060" stroke-width=".8"/><path d="M11 8.4V12M8.8 11L11 14L13.2 11Z" fill="#202020" stroke="#202020" stroke-width="1.1"/></svg>
<span class="t" style="left:93.4px;top:617px;font-size:11px;line-height:14px;height:14px;color:#000;transform:scaleX(0.9900);">VMware Virtual Ethernet Adapter for VMnet8</span>
<div style="left:64px;top:640px;width:9px;height:1px;background:repeating-linear-gradient(90deg,#808080 0 1px,transparent 1px 2px);"></div>
<svg style="left:73px;top:632px" width="16" height="16" viewBox="0 0 16 16"><rect x="6.2" y="-0.2" width="8.8" height="7.2" fill="#c4c8d4" stroke="#a0a4b0" stroke-width=".6"/><rect x="7.4" y="0.8" width="6.4" height="5" fill="#1c30c8"/><path d="M10.4 0.8H13.8V5.8H12Z" fill="#7c98f0"/><rect x="1.5" y="2.9" width="8.8" height="8.6" fill="#d8dadf" stroke="#9498a4" stroke-width=".7"/><rect x="2.9" y="4.2" width="6.3" height="5.7" fill="#0c1cb8"/><path d="M2.9 4.2H5.6L2.9 8.4Z" fill="#4c7cf0"/><path d="M6.6 4.2H9.2V9.9H7.6Z" fill="#88a4f8"/><rect x="6" y="11.5" width="3.2" height="2" fill="#16a84a"/><rect x="0" y="13.5" width="15" height="1.6" fill="#c8ccd4"/><rect x="3.6" y="13.2" width="7.4" height="2.3" fill="#1cbc58"/><circle cx="11" cy="11.2" r="4.6" fill="#fff" stroke="#606060" stroke-width=".8"/><path d="M11 8.4V12M8.8 11L11 14L13.2 11Z" fill="#202020" stroke="#202020" stroke-width="1.1"/></svg>
<span class="t" style="left:93.4px;top:633px;font-size:11px;line-height:14px;height:14px;color:#000;transform:scaleX(0.9632);">Адаптер D-Link DFE-520TX PCI Fast Ethernet</span>
<div style="left:49px;top:656px;width:5px;height:1px;background:repeating-linear-gradient(90deg,#808080 0 1px,transparent 1px 2px);"></div>
<div style="left:39px;top:652px;width:9px;height:9px;background:#fff;border:1px solid #808080;"></div><div style="left:41px;top:656px;width:5px;height:1px;background:#000;"></div><div style="left:43px;top:654px;width:1px;height:5px;background:#000;"></div>
<svg style="left:54px;top:648px" width="16" height="16" viewBox="0 0 16 16"><rect x="1" y="5.5" width="2.4" height="8.5" rx="1" fill="#e8e8e4" stroke="#808488" stroke-width=".8"/><rect x="1.6" y="6.2" width="1.2" height="2" fill="#40c040"/><rect x="4.4" y="0.8" width="11.2" height="9.6" fill="#dcdcd6" stroke="#9ca0a8" stroke-width=".8"/><rect x="5.8" y="2.2" width="8.4" height="6.8" fill="#1020c0"/><path d="M5.8 2.2H9.4L5.8 7.4Z" fill="#5080f0"/><path d="M10.6 2.2H12.6V9H11.4Z" fill="#6c8cf4" opacity=".8"/><rect x="8.4" y="10.6" width="3.2" height="1.6" fill="#a8acb4"/><rect x="6" y="12.2" width="8" height="1.6" fill="#c0c4cc"/></svg>
<span class="t" style="left:74px;top:649px;font-size:11px;line-height:14px;height:14px;color:#000;transform:scaleX(0.9973);">Системные устройства</span>
<div style="left:49px;top:672px;width:5px;height:1px;background:repeating-linear-gradient(90deg,#808080 0 1px,transparent 1px 2px);"></div>
<div style="left:39px;top:668px;width:9px;height:9px;background:#fff;border:1px solid #808080;"></div><div style="left:41px;top:672px;width:5px;height:1px;background:#000;"></div><div style="left:43px;top:670px;width:1px;height:5px;background:#000;"></div>
<svg style="left:54px;top:664px" width="16" height="16" viewBox="0 0 16 16"><rect x="1" y="1" width="4" height="11" rx="1.5" fill="#c8ccd4" stroke="#585c68" stroke-width=".8"/><rect x="2" y="2.2" width="2" height="3" fill="#707888"/><rect x="5.5" y="3.5" width="10" height="5" fill="#e0e4ec" stroke="#8088a0" stroke-width=".7"/><path d="M6.5 5H14.5M6.5 6.6H14.5" stroke="#8088a0" stroke-width=".7" stroke-dasharray="1 .8"/><path d="M6 10Q8 8.6 10.5 9.6Q13 8.6 15 10L15.5 14.5H13L12 12.6H9L8 14.5H5.5Z" fill="#707888" stroke="#404858" stroke-width=".6"/><circle cx="8" cy="11" r=".9" fill="#f0c020"/><circle cx="13" cy="11" r=".9" fill="#e03030"/></svg>
<span class="t" style="left:74px;top:665px;font-size:11px;line-height:14px;height:14px;color:#000;transform:scaleX(0.9970);">Устройства HID (Human Interface Devices)</span>
<div style="left:453px;top:222px;width:403px;height:466px;background:#d4d0c8;"></div>
<div style="left:454px;top:223px;width:400px;height:1px;background:#ffffff;"></div>
<div style="left:454px;top:223px;width:1px;height:463px;background:#ffffff;"></div>
<div style="left:454px;top:686px;width:401px;height:1px;background:#808080;"></div>
<div style="left:854px;top:223px;width:1px;height:464px;background:#808080;"></div>
<div style="left:453px;top:687px;width:403px;height:1px;background:#404040;"></div>
<div style="left:855px;top:222px;width:1px;height:466px;background:#404040;"></div>
<div style="left:456px;top:225px;width:397px;height:18px;background:linear-gradient(90deg,#0a246a,#a6caf0);"></div>
<span class="t" style="left:456.8px;top:227px;font-size:11px;line-height:14px;height:14px;color:#fff;font-weight:bold;transform:scaleX(1.0116);">Свойства:</span>
<span class="t" style="left:516.8px;top:227px;font-size:11px;line-height:14px;height:14px;color:#fff;font-weight:bold;transform:scaleX(1.0759);">ASIX AX88772A USB2.0 to Fast Ethernet Adapter</span>
<div style="left:835px;top:227px;width:16px;height:14px;background:#d4d0c8;"></div><div style="left:835px;top:227px;width:15px;height:1px;background:#ffffff;"></div><div style="left:835px;top:227px;width:1px;height:13px;background:#ffffff;"></div><div style="left:835px;top:240px;width:16px;height:1px;background:#404040;"></div><div style="left:850px;top:227px;width:1px;height:14px;background:#404040;"></div><div style="left:836px;top:239px;width:14px;height:1px;background:#808080;"></div><div style="left:849px;top:228px;width:1px;height:12px;background:#808080;"></div>
<svg style="left:839px;top:230px" width="8" height="7" viewBox="0 0 8 7"><path d="M0.5 0L7.5 7M7.5 0L0.5 7" stroke="#000" stroke-width="1.7"/></svg>
<div style="left:463px;top:255px;width:1px;height:16px;background:#ffffff;"></div><div style="left:464px;top:254px;width:1px;height:1px;background:#ffffff;"></div><div style="left:465px;top:253px;width:134px;height:1px;background:#ffffff;"></div><div style="left:599px;top:255px;width:1px;height:16px;background:#808080;"></div><div style="left:600px;top:255px;width:1px;height:16px;background:#404040;"></div><div style="left:599px;top:254px;width:1px;height:1px;background:#404040;"></div>
<div style="left:603px;top:253px;width:240px;height:1px;background:#ffffff;"></div><div style="left:843px;top:255px;width:1px;height:16px;background:#808080;"></div><div style="left:844px;top:255px;width:1px;height:16px;background:#404040;"></div><div style="left:843px;top:254px;width:1px;height:1px;background:#404040;"></div>
<div style="left:601px;top:255px;width:1px;height:16px;background:#ffffff;"></div>
<div style="left:463px;top:273px;width:1px;height:16px;background:#ffffff;"></div><div style="left:464px;top:272px;width:1px;height:1px;background:#ffffff;"></div><div style="left:465px;top:271px;width:105px;height:1px;background:#ffffff;"></div><div style="left:570px;top:273px;width:1px;height:16px;background:#808080;"></div><div style="left:571px;top:273px;width:1px;height:16px;background:#404040;"></div><div style="left:570px;top:272px;width:1px;height:1px;background:#404040;"></div>
<div style="left:574px;top:271px;width:149px;height:1px;background:#ffffff;"></div><div style="left:723px;top:273px;width:1px;height:16px;background:#808080;"></div><div style="left:724px;top:273px;width:1px;height:16px;background:#404040;"></div><div style="left:723px;top:272px;width:1px;height:1px;background:#404040;"></div>
<div style="left:572px;top:273px;width:1px;height:16px;background:#ffffff;"></div>
<div style="left:461px;top:289px;width:264px;height:1px;background:#ffffff;"></div>
<div style="left:461px;top:289px;width:1px;height:358px;background:#ffffff;"></div>
<div style="left:845px;top:290px;width:1px;height:357px;background:#808080;"></div>
<div style="left:846px;top:289px;width:1px;height:359px;background:#404040;"></div>
<div style="left:462px;top:646px;width:384px;height:1px;background:#808080;"></div>
<div style="left:461px;top:647px;width:386px;height:1px;background:#404040;"></div>
<div style="left:725px;top:269px;width:121px;height:22px;background:#d4d0c8;"></div>
<div style="left:725px;top:271px;width:1px;height:19px;background:#ffffff;"></div>
<div style="left:726px;top:270px;width:1px;height:1px;background:#ffffff;"></div>
<div style="left:727px;top:269px;width:117px;height:1px;background:#ffffff;"></div>
<div style="left:845px;top:271px;width:1px;height:20px;background:#808080;"></div>
<div style="left:846px;top:271px;width:1px;height:20px;background:#404040;"></div>
<div style="left:845px;top:270px;width:1px;height:1px;background:#404040;"></div>
<span class="t" style="left:506px;top:256px;font-size:11.5px;line-height:14.5px;height:14.5px;color:#000;transform:scaleX(0.9401);">Сведения</span>
<span class="t" style="left:644.3px;top:256px;font-size:11.5px;line-height:14.5px;height:14.5px;color:#000;transform:scaleX(0.9711);">Управление электропитанием</span>
<span class="t" style="left:498.8px;top:274px;font-size:11.5px;line-height:14.5px;height:14.5px;color:#000;transform:scaleX(0.9411);">Общие</span>
<span class="t" style="left:608.7px;top:274px;font-size:11.5px;line-height:14.5px;height:14.5px;color:#000;transform:scaleX(0.9664);">Дополнительно</span>
<span class="t" style="left:763px;top:272px;font-size:11.5px;line-height:14.5px;height:14.5px;color:#000;transform:scaleX(0.9786);">Драйвер</span>
<svg style="left:476px;top:303px" width="32" height="32" viewBox="0 0 32 32">
<defs>
<linearGradient id="sc1" x1="0" y1="0" x2="1" y2="0.12"><stop offset="0" stop-color="#1420b8"/><stop offset=".42" stop-color="#0c14c4"/><stop offset=".52" stop-color="#d8e0ff"/><stop offset=".72" stop-color="#8098f4"/><stop offset=".9" stop-color="#2030d0"/><stop offset="1" stop-color="#1018b8"/></linearGradient>
<linearGradient id="sc2" x1="0" y1="0" x2="1" y2="0.1"><stop offset="0" stop-color="#1420c8"/><stop offset=".45" stop-color="#3048e0"/><stop offset=".8" stop-color="#c8d4ff"/><stop offset="1" stop-color="#e8ecff"/></linearGradient>
</defs>
<path d="M15.8 2.2L31 4L30 16.8L16 14.6Z" fill="#e6e6e0"/>
<path d="M16.6 3.1L30.2 4.7L29.3 15.8L17 13.9Z" fill="url(#sc2)"/>
<path d="M25 16L26.5 19L29 19.8" stroke="#d4d4d0" stroke-width="1.6" fill="none"/>
<path d="M7 3L25.3 5.3L24 20.2L5.4 16.6Z" fill="#ecece4"/>
<path d="M8 3.9L24.3 6L23.1 19L6.5 15.8Z" fill="url(#sc1)"/>
<path d="M8 3.9L11 4.3L7.4 13Z" fill="#5c78f0" opacity=".55"/>
<path d="M13.5 18.5L22 20L23.8 24L13 22.4Z" fill="#dcdcd6"/>
<path d="M1.5 23.6L26 30" stroke="#a8acb0" stroke-width="3.6" stroke-linecap="round"/>
<path d="M1.5 23.6L26 30" stroke="#e0e4e8" stroke-width="2.2" stroke-linecap="round"/>
<path d="M7 23.6L19.5 27.6" stroke="#14b44c" stroke-width="3.8"/>
<path d="M9.5 27.6L18.5 22.6" stroke="#22cc5c" stroke-width="3.4"/>
</svg>
<span class="t" style="left:520.4px;top:306px;font-size:11.5px;line-height:14.5px;height:14.5px;color:#000;transform:scaleX(0.9338);">ASIX AX88772A USB2.0 to Fast Ethernet Adapter</span>
<span class="t" style="left:503.8px;top:350px;font-size:11.5px;line-height:14.5px;height:14.5px;color:#000;transform:scaleX(0.9582);">Поставщик драйвера:</span>
<span class="t" style="left:628.8px;top:350px;font-size:11.5px;line-height:14.5px;height:14.5px;color:#000;transform:scaleX(0.9230);">ASIX</span>
<span class="t" style="left:503.8px;top:372px;font-size:11.5px;line-height:14.5px;height:14.5px;color:#000;transform:scaleX(0.9908);">Дата разработки:</span>
<span class="t" style="left:628.8px;top:372px;font-size:11.5px;line-height:14.5px;height:14.5px;color:#000;transform:scaleX(0.9559);">05.11.2013</span>
<span class="t" style="left:503.8px;top:395px;font-size:11.5px;line-height:14.5px;height:14.5px;color:#000;transform:scaleX(0.9465);">Версия драйвера:</span>
<span class="t" style="left:628.8px;top:395px;font-size:11.5px;line-height:14.5px;height:14.5px;color:#000;transform:scaleX(0.9524);">3.14.5.0</span>
<span class="t" style="left:503.8px;top:418px;font-size:11.5px;line-height:14.5px;height:14.5px;color:#000;transform:scaleX(0.9427);">Цифровая подпись:</span>
<span class="t" style="left:628.8px;top:418px;font-size:11.5px;line-height:14.5px;height:14.5px;color:#000;transform:scaleX(0.9132);">Microsoft Windows Hardware Compatibility</span>
<span class="t" style="left:628.8px;top:431px;font-size:11.5px;line-height:14.5px;height:14.5px;color:#000;transform:scaleX(0.8988);">Publisher</span>
<div style="left:476px;top:454px;width:105px;height:24px;border:1px solid #000;"></div><div style="left:477px;top:455px;width:103px;height:22px;background:#d4d0c8;"></div><div style="left:477px;top:455px;width:102px;height:1px;background:#ffffff;"></div><div style="left:477px;top:455px;width:1px;height:21px;background:#ffffff;"></div><div style="left:477px;top:476px;width:103px;height:1px;background:#404040;"></div><div style="left:579px;top:455px;width:1px;height:22px;background:#404040;"></div><div style="left:478px;top:475px;width:101px;height:1px;background:#808080;"></div><div style="left:578px;top:456px;width:1px;height:20px;background:#808080;"></div>
<span class="t" style="left:503px;top:459px;font-size:11.5px;line-height:14.5px;height:14.5px;color:#000;transform:scaleX(0.9477);">Сведения</span>
<div style="left:476px;top:491px;width:105px;height:24px;background:#d4d0c8;"></div><div style="left:476px;top:491px;width:104px;height:1px;background:#ffffff;"></div><div style="left:476px;top:491px;width:1px;height:23px;background:#ffffff;"></div><div style="left:476px;top:514px;width:105px;height:1px;background:#404040;"></div><div style="left:580px;top:491px;width:1px;height:24px;background:#404040;"></div><div style="left:477px;top:513px;width:103px;height:1px;background:#808080;"></div><div style="left:579px;top:492px;width:1px;height:22px;background:#808080;"></div>
<span class="t" style="left:497.8px;top:496px;font-size:11.5px;line-height:14.5px;height:14.5px;color:#000;transform:scaleX(0.9504);">Обновить...</span>
<div style="left:476px;top:532px;width:105px;height:24px;background:#d4d0c8;"></div><div style="left:476px;top:532px;width:104px;height:1px;background:#ffffff;"></div><div style="left:476px;top:532px;width:1px;height:23px;background:#ffffff;"></div><div style="left:476px;top:555px;width:105px;height:1px;background:#404040;"></div><div style="left:580px;top:532px;width:1px;height:24px;background:#404040;"></div><div style="left:477px;top:554px;width:103px;height:1px;background:#808080;"></div><div style="left:579px;top:533px;width:1px;height:22px;background:#808080;"></div>
<span class="t" style="left:505.8px;top:538px;font-size:11.5px;line-height:14.5px;height:14.5px;color:#fff;transform:scaleX(0.9795);">Откатить</span>
<span class="t" style="left:504.8px;top:537px;font-size:11.5px;line-height:14.5px;height:14.5px;color:#808080;transform:scaleX(0.9795);">Откатить</span>
<div style="left:476px;top:575px;width:105px;height:24px;background:#d4d0c8;"></div><div style="left:476px;top:575px;width:104px;height:1px;background:#ffffff;"></div><div style="left:476px;top:575px;width:1px;height:23px;background:#ffffff;"></div><div style="left:476px;top:598px;width:105px;height:1px;background:#404040;"></div><div style="left:580px;top:575px;width:1px;height:24px;background:#404040;"></div><div style="left:477px;top:597px;width:103px;height:1px;background:#808080;"></div><div style="left:579px;top:576px;width:1px;height:22px;background:#808080;"></div>
<span class="t" style="left:500px;top:580px;font-size:11.5px;line-height:14.5px;height:14.5px;color:#000;transform:scaleX(0.9529);">Отключить</span>
<div style="left:476px;top:610px;width:105px;height:24px;background:#d4d0c8;"></div><div style="left:476px;top:610px;width:104px;height:1px;background:#ffffff;"></div><div style="left:476px;top:610px;width:1px;height:23px;background:#ffffff;"></div><div style="left:476px;top:633px;width:105px;height:1px;background:#404040;"></div><div style="left:580px;top:610px;width:1px;height:24px;background:#404040;"></div><div style="left:477px;top:632px;width:103px;height:1px;background:#808080;"></div><div style="left:579px;top:611px;width:1px;height:22px;background:#808080;"></div>
<span class="t" style="left:506.1px;top:615px;font-size:11.5px;line-height:14.5px;height:14.5px;color:#000;transform:scaleX(0.9930);">Удалить</span>
<span class="t" style="left:602px;top:459px;font-size:11.5px;line-height:14.5px;height:14.5px;color:#000;transform:scaleX(0.9404);">Просмотр сведений о файлах драйверов.</span>
<span class="t" style="left:601.4px;top:489px;font-size:11.5px;line-height:14.5px;height:14.5px;color:#000;transform:scaleX(0.9494);">Обновление драйверов для этого</span>
<span class="t" style="left:601.4px;top:502px;font-size:11.5px;line-height:14.5px;height:14.5px;color:#000;transform:scaleX(0.9703);">устройства.</span>
<span class="t" style="left:601.4px;top:525px;font-size:11.5px;line-height:14.5px;height:14.5px;color:#000;transform:scaleX(0.9549);">Если устройство не работает после</span>
<span class="t" style="left:601.4px;top:537px;font-size:11.5px;line-height:14.5px;height:14.5px;color:#000;transform:scaleX(0.9549);">обновления драйвера, откат</span>
<span class="t" style="left:601.4px;top:550px;font-size:11.5px;line-height:14.5px;height:14.5px;color:#000;transform:scaleX(0.9609);">восстанавливает прежний драйвер.</span>
<span class="t" style="left:601.4px;top:581px;font-size:11.5px;line-height:14.5px;height:14.5px;color:#000;transform:scaleX(0.9579);">Отключение выбранного устройства.</span>
<span class="t" style="left:601.4px;top:615px;font-size:11.5px;line-height:14.5px;height:14.5px;color:#000;transform:scaleX(0.9393);">Удаление драйвера (для опытных).</span>
<div style="left:691px;top:655px;width:75px;height:23px;background:#d4d0c8;"></div><div style="left:691px;top:655px;width:74px;height:1px;background:#ffffff;"></div><div style="left:691px;top:655px;width:1px;height:22px;background:#ffffff;"></div><div style="left:691px;top:677px;width:75px;height:1px;background:#404040;"></div><div style="left:765px;top:655px;width:1px;height:23px;background:#404040;"></div><div style="left:692px;top:676px;width:73px;height:1px;background:#808080;"></div><div style="left:764px;top:656px;width:1px;height:21px;background:#808080;"></div>
<span class="t" style="left:720px;top:659px;font-size:11.5px;line-height:14.5px;height:14.5px;color:#000;transform:scaleX(0.9805);">OK</span>
<div style="left:772px;top:655px;width:75px;height:23px;background:#d4d0c8;"></div><div style="left:772px;top:655px;width:74px;height:1px;background:#ffffff;"></div><div style="left:772px;top:655px;width:1px;height:22px;background:#ffffff;"></div><div style="left:772px;top:677px;width:75px;height:1px;background:#404040;"></div><div style="left:846px;top:655px;width:1px;height:23px;background:#404040;"></div><div style="left:773px;top:676px;width:73px;height:1px;background:#808080;"></div><div style="left:845px;top:656px;width:1px;height:21px;background:#808080;"></div>
<span class="t" style="left:788.7px;top:659px;font-size:11.5px;line-height:14.5px;height:14.5px;color:#000;transform:scaleX(0.9621);">Отмена</span>
</body></html>
